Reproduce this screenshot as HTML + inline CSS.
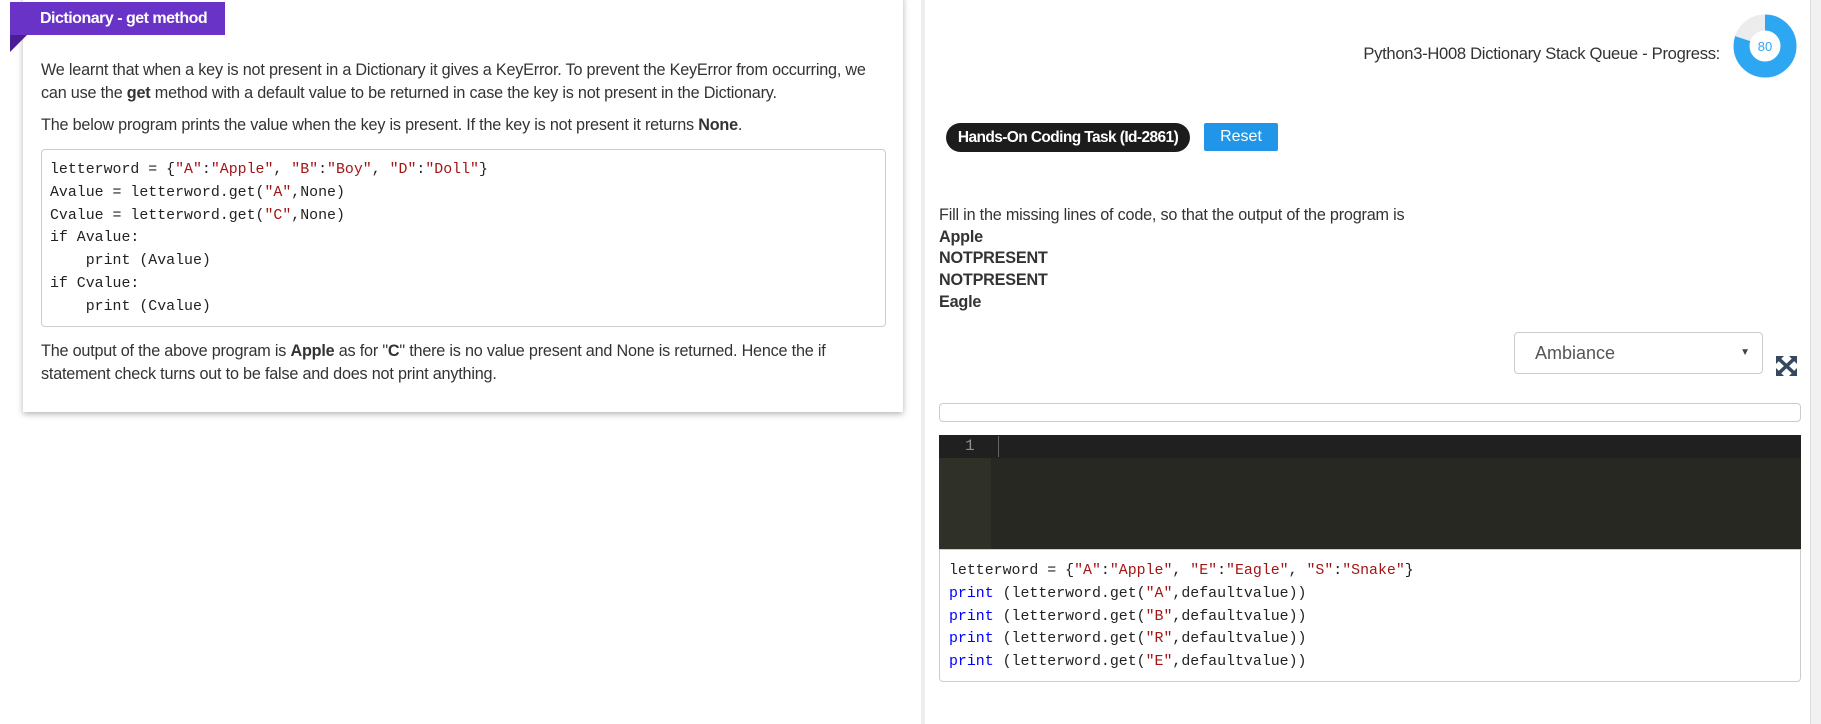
<!DOCTYPE html>
<html><head><meta charset="utf-8"><style>
*{box-sizing:border-box;margin:0;padding:0}
body{width:1821px;height:724px;background:#fff;position:relative;overflow:hidden;font-family:"Liberation Sans",sans-serif;color:#333}
.abs{position:absolute}
.card{left:23px;top:-5px;width:880px;height:417px;background:#fff;box-shadow:0 2px 6px rgba(0,0,0,.3)}
.banner{left:10px;top:2px;width:215px;height:33px;background:#6a33c8;color:#fff;font-weight:bold;font-size:16px;line-height:33px;padding-left:30px;letter-spacing:-0.5px}
.tri{left:10px;top:35px;width:0;height:0;border-left:17px solid transparent;border-top:17px solid #4a1f96;transform:scaleX(-1)}
.p{font-size:16.2px;color:#333;letter-spacing:-0.2px;line-height:22.5px}
.code{font-family:"Liberation Mono",monospace;font-size:14.9px;line-height:22.8px;color:#222;white-space:pre}
.s{color:#a31515}.k{color:#0000ff}
</style></head><body>
<div class="abs card"></div>
<div class="abs banner">Dictionary - get method</div>
<div class="abs tri"></div>
<div class="abs p" style="left:41px;top:59px;width:870px">We learnt that when a key is not present in a Dictionary it gives a KeyError. To prevent the KeyError from occurring, we<br>can use the <b>get</b> method with a default value to be returned in case the key is not present in the Dictionary.</div>
<div class="abs p" style="left:41px;top:114px">The below program prints the value when the key is present. If the key is not present it returns <b>None</b>.</div>
<div class="abs" style="left:41px;top:149px;width:845px;height:178px;border:1px solid #ccc;border-radius:4px"></div>
<div class="abs code" style="left:50px;top:159px">letterword = {<span class="s">"A"</span>:<span class="s">"Apple"</span>, <span class="s">"B"</span>:<span class="s">"Boy"</span>, <span class="s">"D"</span>:<span class="s">"Doll"</span>}
Avalue = letterword.get(<span class="s">"A"</span>,None)
Cvalue = letterword.get(<span class="s">"C"</span>,None)
if Avalue:
    print (Avalue)
if Cvalue:
    print (Cvalue)</div>
<div class="abs p" style="left:41px;top:340px">The output of the above program is <b>Apple</b> as for "<b>C</b>" there is no value present and None is returned. Hence the if<br>statement check turns out to be false and does not print anything.</div>

<div class="abs" style="left:921px;top:0;width:4px;height:724px;background:#eee"></div>
<div class="abs" style="left:1810px;top:0;width:11px;height:724px;background:#f1f1f1;border-left:1px solid #ddd"></div>
<div class="abs" style="left:1250px;top:44px;width:470px;text-align:right;font-size:16.6px;letter-spacing:-0.3px;color:#333">Python3-H008 Dictionary Stack Queue - Progress:</div>
<svg class="abs" style="left:1730px;top:11px" width="70" height="70" viewBox="0 0 70 70">
<circle cx="35" cy="35" r="23.5" fill="none" stroke="#ececec" stroke-width="16"/>
<circle cx="35" cy="35" r="23.5" fill="none" stroke="#2ea7f2" stroke-width="16" stroke-dasharray="118.1 147.7" transform="rotate(-90 35 35)"/>
<text x="35" y="40" text-anchor="middle" font-family="Liberation Sans" font-size="13" fill="#2ea7f2">80</text>
</svg>
<div class="abs" style="left:946px;top:123px;width:244px;height:29px;background:#1c1c1c;border-radius:15px;color:#fff;font-weight:bold;font-size:15.5px;line-height:29px;text-align:center;letter-spacing:-0.6px">Hands-On Coding Task (Id-2861)</div>
<div class="abs" style="left:1204px;top:123px;width:74px;height:28px;background:#2196e8;border-radius:2px;color:#fff;font-size:16px;line-height:28px;text-align:center">Reset</div>
<div class="abs p" style="left:939px;top:205px;line-height:21.7px">Fill in the missing lines of code, so that the output of the program is<br><b>Apple</b><br><b>NOTPRESENT</b><br><b>NOTPRESENT</b><br><b>Eagle</b></div>
<div class="abs" style="left:1514px;top:332px;width:249px;height:42px;border:1px solid #ccc;border-radius:4px;font-size:18px;line-height:40px;padding-left:20px;color:#555">Ambiance<span style="position:absolute;right:12px;top:0;font-size:10px;color:#444">▼</span></div>
<svg class="abs" style="left:1776px;top:356px" width="21" height="20" viewBox="0 0 21 20"><g stroke="#34495e" stroke-width="3.5"><path d="M3 3L18 17M18 3L3 17"/></g><g fill="#34495e"><path d="M0 0h8L0 8z"/><path d="M21 0h-8l8 8z"/><path d="M0 20h8L0 12z"/><path d="M21 20h-8l8-8z"/></g></svg>
<div class="abs" style="left:939px;top:403px;width:862px;height:19px;border:1px solid #ccc;border-radius:4px"></div>
<div class="abs" style="left:939px;top:435px;width:862px;height:114px;background:#272822"></div>
<div class="abs" style="left:939px;top:435px;width:52px;height:114px;background:#2f3129"></div>
<div class="abs" style="left:939px;top:435px;width:862px;height:23px;background:#202020"></div>
<div class="abs" style="left:998px;top:436px;width:1px;height:21px;background:#666"></div>
<div class="abs code" style="left:965px;top:435px;color:#8f908a;font-size:16px">1</div>
<div class="abs" style="left:939px;top:549px;width:862px;height:133px;border:1px solid #ccc;border-radius:0 0 4px 4px"></div>
<div class="abs code" style="left:949px;top:560px">letterword = {<span class="s">"A"</span>:<span class="s">"Apple"</span>, <span class="s">"E"</span>:<span class="s">"Eagle"</span>, <span class="s">"S"</span>:<span class="s">"Snake"</span>}
<span class="k">print</span> (letterword.get(<span class="s">"A"</span>,defaultvalue))
<span class="k">print</span> (letterword.get(<span class="s">"B"</span>,defaultvalue))
<span class="k">print</span> (letterword.get(<span class="s">"R"</span>,defaultvalue))
<span class="k">print</span> (letterword.get(<span class="s">"E"</span>,defaultvalue))</div>
</body></html>
